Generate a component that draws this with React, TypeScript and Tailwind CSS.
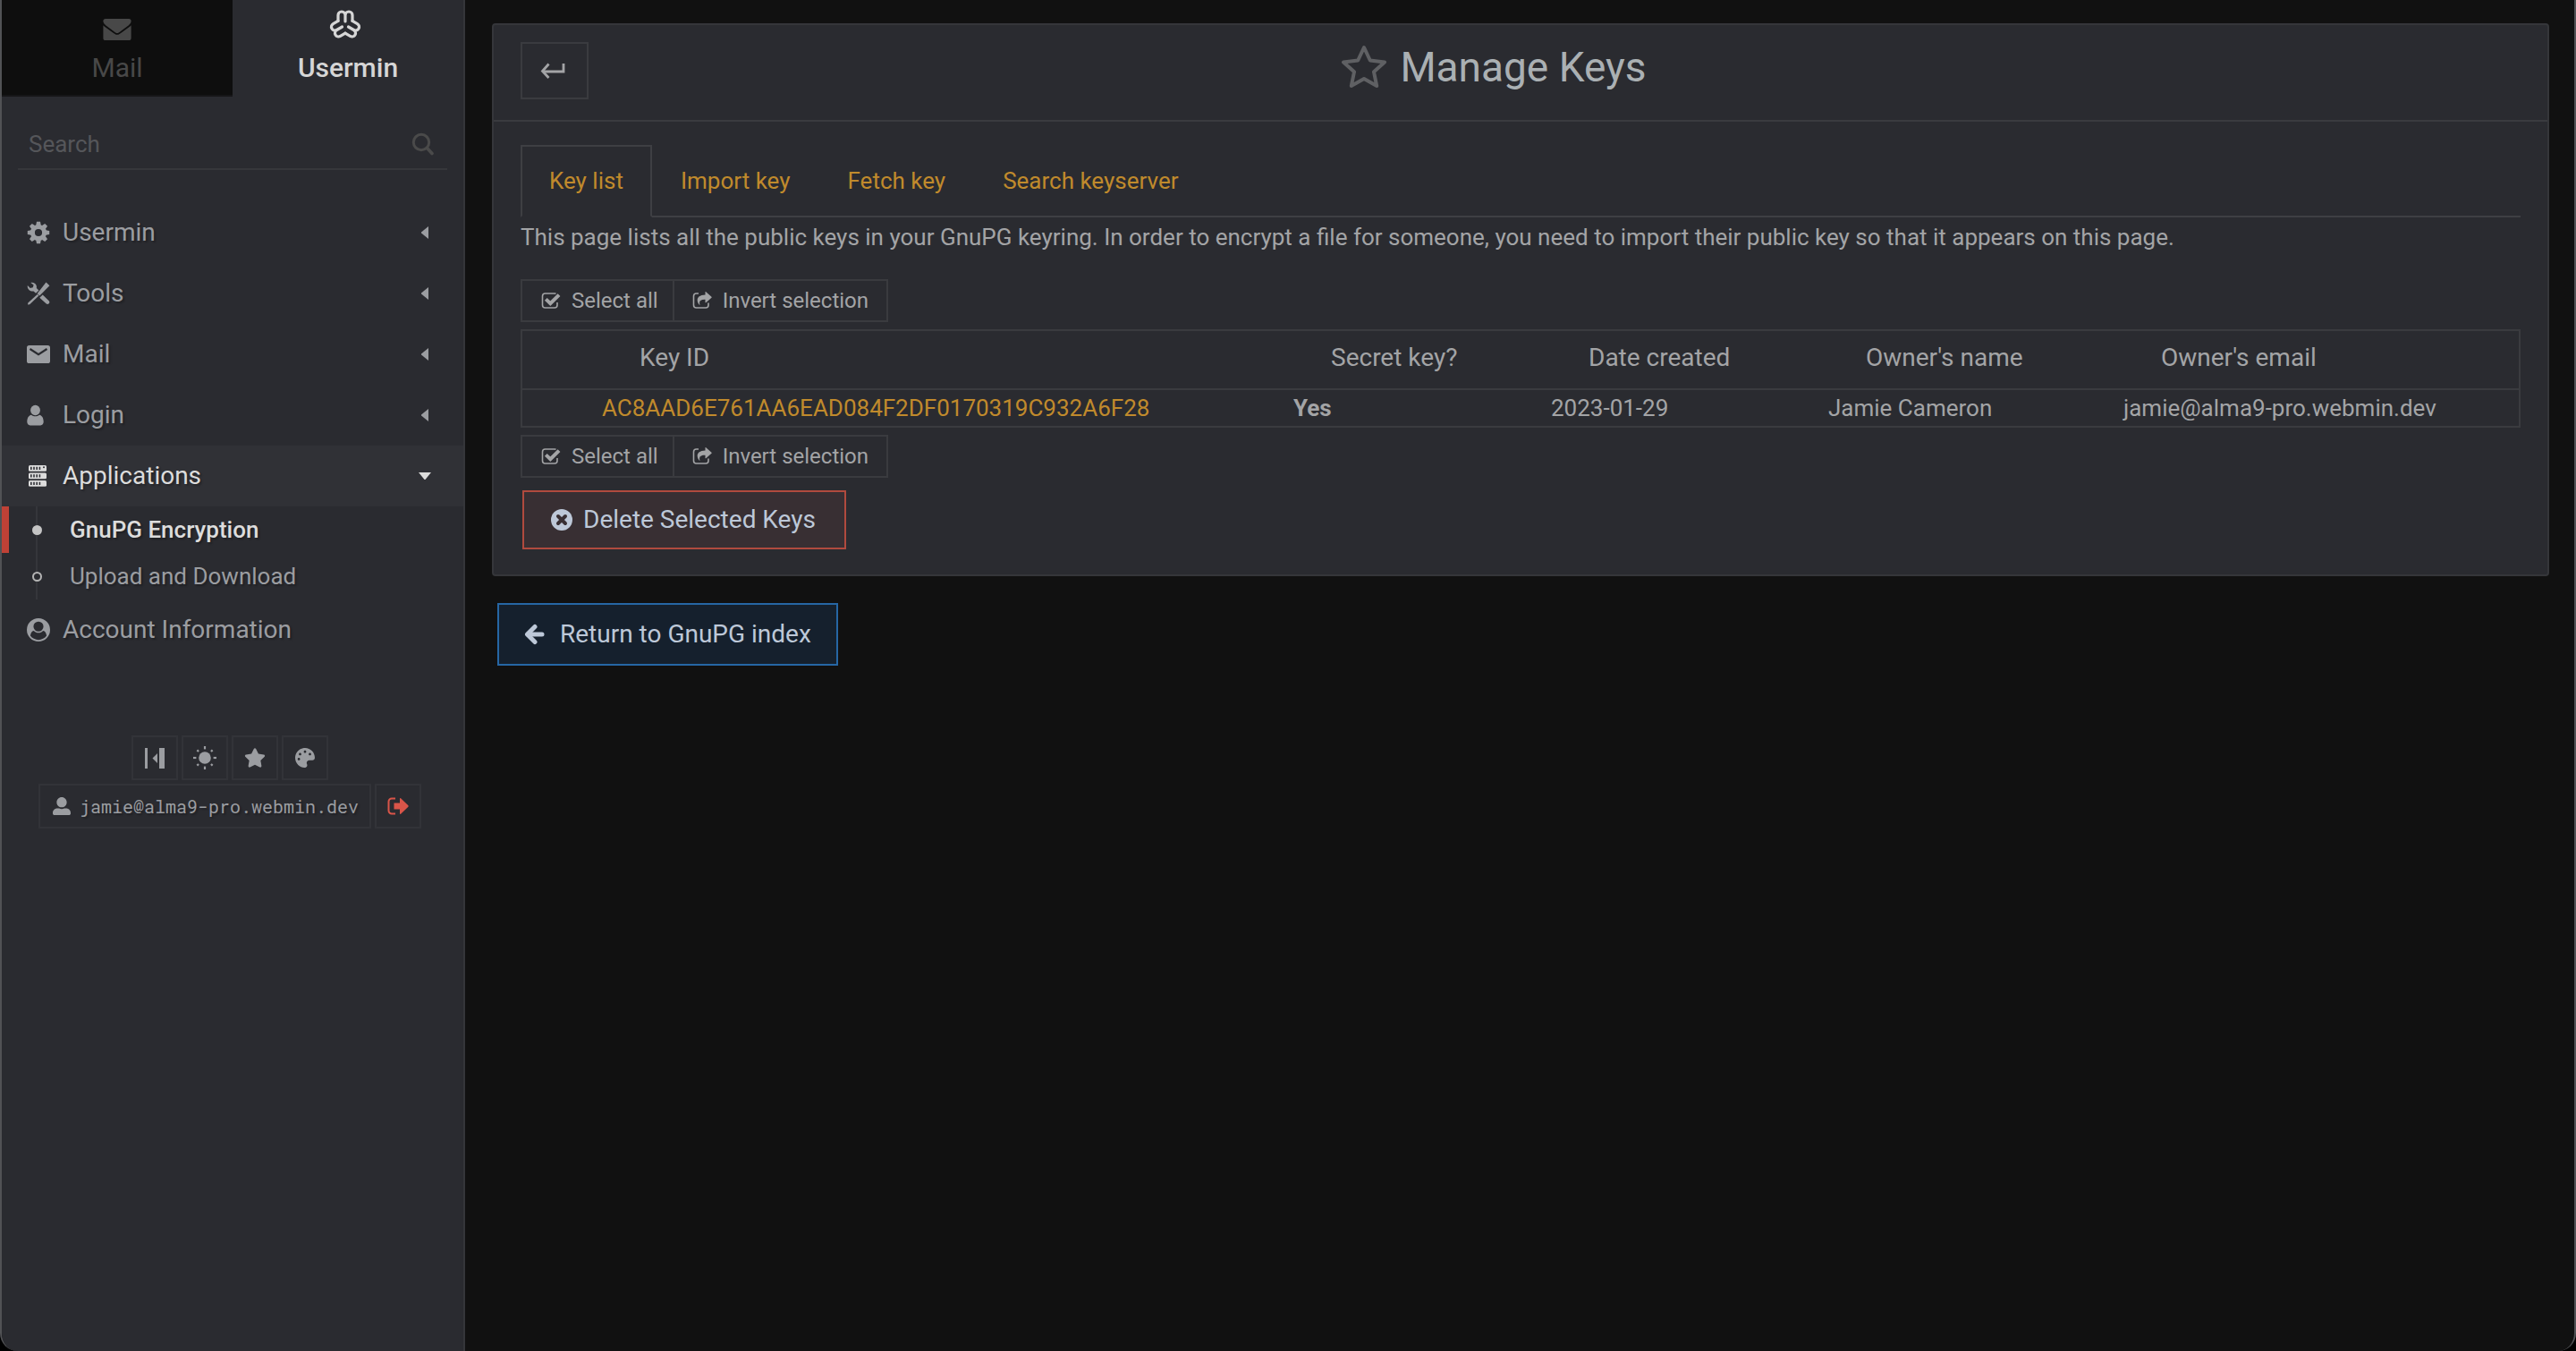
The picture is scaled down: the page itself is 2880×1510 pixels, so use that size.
import React, { useState } from "react";
import { FaStar, FaPalette, FaUserAlt } from "react-icons/fa";

type IconProps = { className?: string };

function UserminLogo({ className }: IconProps) {
  const limb = "M-8 -4.6V-11a4 4 0 0 1 8 0V-4M0 -11a4 4 0 0 1 8 0V-4.6";
  return (
    <svg viewBox="-18 -18 42 36" className={className} fill="none" stroke="currentColor" strokeWidth="3.2" strokeLinecap="round" strokeLinejoin="round" aria-hidden="true">
      <path d={limb} />
      <path d={limb} transform="rotate(120)" />
      <path d={limb} transform="rotate(240)" />
    </svg>
  );
}

function EnvelopeIcon({ className }: IconProps) {
  return (
    <svg viewBox="0 0 32 26" className={className} fill="currentColor" aria-hidden="true">
      <path d="M3 1h26a2.6 2.6 0 0 1 2.6 2.6c0 2-1.4 3.6-3 4.8L19.5 15.2c-1.2.9-2.4 1.8-3.500 1.800s-2.300-.9-3.500-1.800L3.400 8.400C1.800 7.200.4 5.600.4 3.600A2.600 2.600 0 0 1 3 1z" />
      <path d="M.4 8.200c.6.7 1.200 1.200 1.900 1.700l8.900 6.500c1.500 1.100 3 2.400 4.800 2.400s3.300-1.300 4.800-2.400l8.900-6.500c.7-.5 1.300-1 1.900-1.700V22.400A2.600 2.600 0 0 1 29 25H3A2.600 2.600 0 0 1 .4 22.400z" />
    </svg>
  );
}

function SearchIcon({ className }: IconProps) {
  return (
    <svg viewBox="0 0 26 26" className={className} fill="none" stroke="currentColor" aria-hidden="true">
      <circle cx="11" cy="11" r="8.700" strokeWidth="3" />
      <path d="M17.500 17.500L23 23.500" strokeWidth="3.600" strokeLinecap="round" />
    </svg>
  );
}

function GearIcon({ className }: IconProps) {
  return (
    <svg viewBox="-13 -13 26 26" className={className} fill="currentColor" aria-hidden="true">
      <circle r="6.600" fill="none" stroke="currentColor" strokeWidth="5" />
      {[0, 45, 90, 135, 180, 225, 270, 315].map((a) => (
        <path key={a} d="M-2.800 -8L-2 -12.200H2L2.800 -8z" transform={`rotate(${a})`} />
      ))}
    </svg>
  );
}

function ToolsIcon({ className }: IconProps) {
  return (
    <svg viewBox="0 0 26 26" className={className} fill="currentColor" aria-hidden="true">
      <path d="M21.500.6l3.900 3.700L14.300 15.500 11.600 13.200z" />
      <path d="M11.800 14L13.400 15.500 3.200 25.200 1 25.500 1.300 23.600z" />
      <path d="M4.300.9c2.700-.7 5.600.7 6.400 3.300.3 1 .3 1.900.1 2.800l2.600 2.500-3.300 3.300-2.600-2.400c-1 .3-2.100.2-3.200-.2C1.800 9.300.3 6.700.8 4.100l3 2.900 3-.8.8-2.700z" />
      <path d="M14.300 17.800l3.400-3.300 7 6.700c.9.900.9 2.200 0 3.100s-2.300.9-3.200 0z" />
    </svg>
  );
}

function MailIcon({ className }: IconProps) {
  return (
    <svg viewBox="0 0 26 26" className={className} aria-hidden="true">
      <rect y="3" width="26" height="20" rx="2.600" fill="currentColor" />
      <path d="M3.500 7L13 13.200 22.500 7" fill="none" stroke="#2a2b30" strokeWidth="2.200" />
    </svg>
  );
}

function LoginIcon({ className }: IconProps) {
  return (
    <svg viewBox="0 0 26 26" className={className} fill="currentColor" aria-hidden="true">
      <ellipse cx="9.500" cy="7.500" rx="5.400" ry="5.700" />
      <path d="M5 12.800c2.700 2 6.300 2 9 0 3.200.6 4.700 3.700 4.700 7.800 0 2.300-1.400 3.900-3.400 3.900H3.700C1.700 24.500.3 22.900.3 20.600c0-4.100 1.500-7.200 4.700-7.800z" />
    </svg>
  );
}

function ServersIcon({ className }: IconProps) {
  return (
    <svg viewBox="0 0 26 26" className={className} aria-hidden="true">
      {[1, 9.5, 18].map((y) => (
        <g key={y}>
          <rect x="2" y={y} width="20" height="6.800" rx="1.500" fill="currentColor" />
          <path d={`M4.800 ${y + 1.7}v3.400M8 ${y + 1.7}v3.400M11.200 ${y + 1.7}v3.400M14.400 ${y + 1.7}v3.400`} stroke="#303136" strokeWidth="1.600" />
        </g>
      ))}
      <circle cx="19" cy="3.300" r="1" fill="#303136" />
    </svg>
  );
}

function AccountIcon({ className }: IconProps) {
  return (
    <svg viewBox="0 0 1792 1792" className={className} fill="currentColor" fillRule="evenodd" aria-hidden="true">
      <path d="M1523 1339q-22-155-87.500-257.500t-184.500-118.500q-67 74-159.500 115.500t-195.500 41.500-195.500-41.500-159.500-115.500q-119 16-184.500 118.500t-87.500 257.500q106 150 271 237.500t356 87.500 356-87.500 271-237.500zm-243-699q0-159-112.500-271.500t-271.500-112.500-271.500 112.500-112.500 271.500 112.500 271.500 271.500 112.500 271.500-112.500 112.500-271.500zM896 0a896 896 0 1 1 0 1792 896 896 0 0 1 0-1792z" />
    </svg>
  );
}

function CollapseIcon({ className }: IconProps) {
  return (
    <svg viewBox="0 0 26 26" className={className} fill="currentColor" aria-hidden="true">
      <rect x="2" y="2" width="3" height="23" />
      <rect x="18" y="2" width="6" height="23" />
      <path d="M16 8v11l-5.500-5.500z" />
    </svg>
  );
}

function SunIcon({ className }: IconProps) {
  return (
    <svg viewBox="-13 -13 26 26" className={className} aria-hidden="true">
      <circle r="6.800" fill="currentColor" />
      {[0, 45, 90, 135, 180, 225, 270, 315].map((a) => (
        <path key={a} d={a % 90 ? "M0 -9.800V-12.200" : "M0 -9.600V-13"} stroke="currentColor" strokeWidth="2.200" transform={`rotate(${a})`} />
      ))}
    </svg>
  );
}

function LogoutIcon({ className }: IconProps) {
  return (
    <svg viewBox="0 0 26 26" className={className} fill="currentColor" aria-hidden="true">
      <path d="M10 4.500H6A3.500 3.500 0 0 0 2.500 8v10A3.500 3.500 0 0 0 6 21.500h4" fill="none" stroke="currentColor" strokeWidth="2" />
      <path d="M8.500 9.500H15V4.800c0-.7.6-.9 1.100-.5l8.300 8c.4.4.4 1 0 1.400l-8.300 8c-.5.4-1.100.2-1.100-.5V16.500H8.500z" />
    </svg>
  );
}

function ReturnIcon({ className }: IconProps) {
  return (
    <svg viewBox="0 0 32 20" className={className} fill="none" stroke="currentColor" strokeWidth="2.800" aria-hidden="true">
      <path d="M26 2V11H3" />
      <path d="M9.500 2.500L2.500 10.500 9.500 18" />
    </svg>
  );
}

function OutlineStarIcon({ className }: IconProps) {
  return (
    <svg viewBox="0 1 52 50" className={className} fill="none" stroke="currentColor" strokeWidth="4" strokeLinejoin="round" aria-hidden="true">
      <path d="M26 4l6.800 14.500L49 20.500 37 31.300 40.200 47 26 39 11.800 47 15 31.300 3 20.500l16.200-2z" />
    </svg>
  );
}

function CheckBoxIcon({ className }: IconProps) {
  return (
    <svg viewBox="0 0 22 20" className={className} fill="none" stroke="currentColor" aria-hidden="true">
      <path d="M16.500 2.200C16 2 15.500 2 15 2H4.500A3 3 0 0 0 1.500 5v10a3 3 0 0 0 3 3H15a3 3 0 0 0 3-3v-3" strokeWidth="1.600" />
      <path d="M5.300 8.400l5 4.800L20 3.600" strokeWidth="4" />
    </svg>
  );
}

function ShareIcon({ className }: IconProps) {
  return (
    <svg viewBox="0 0 22 20" className={className} fill="currentColor" aria-hidden="true">
      <path d="M7 2H4.500A3 3 0 0 0 1.500 5v10a3 3 0 0 0 3 3H15a3 3 0 0 0 3-3v-2.500" fill="none" stroke="currentColor" strokeWidth="1.600" />
      <path d="M14.500.4c0-.4.5-.5.8-.2l6.200 5.500c.3.3.3.7 0 1l-6.200 5.500c-.3.3-.8.1-.8-.3V8.700c-5.400-.2-7.400 1.600-6 6.500C3.800 10.500 4.500 3.800 14.500 3.500z" />
    </svg>
  );
}

function TimesCircleIcon({ className }: IconProps) {
  return (
    <svg viewBox="0 0 24 24" className={className} aria-hidden="true">
      <circle cx="12" cy="12" r="12" fill="currentColor" />
      <path d="M8 8l8 8M16 8l-8 8" stroke="#382f33" strokeWidth="4" strokeLinecap="round" />
    </svg>
  );
}

function ArrowLeftIcon({ className }: IconProps) {
  return (
    <svg viewBox="0 0 24 24" className={className} fill="none" stroke="currentColor" strokeWidth="5" strokeLinecap="round" strokeLinejoin="round" aria-hidden="true">
      <path d="M4 12H20" />
      <path d="M12 3.500L3.500 12l8.500 8.500" />
    </svg>
  );
}

const menu = [
  { label: "Usermin", Icon: GearIcon },
  { label: "Tools", Icon: ToolsIcon },
  { label: "Mail", Icon: MailIcon },
  { label: "Login", Icon: LoginIcon },
];

const quickActions = [
  { label: "Collapse menu", icon: <CollapseIcon className="size-[26px]" /> },
  { label: "Toggle theme", icon: <SunIcon className="size-[26px]" /> },
  { label: "Favorites", icon: <FaStar className="size-6" /> },
  { label: "Theme palette", icon: <FaPalette className="size-[22px]" /> },
];

const shadow = "[text-shadow:2px_2px_2px_rgba(0,0,0,0.25)]";

function Sidebar() {
  return (
    <aside className="flex w-[518px] shrink-0 flex-col border-r-2 border-[#35363a] bg-[#2a2b30] text-[#9b9da1]">
      <nav className="grid h-[108px] grid-cols-2" aria-label="Product">
        <a href="#mail" className="flex flex-col items-center border-b-2 border-[#161618] bg-[#0e0e0e] pt-5 text-[30px] leading-9 text-[#484848]">
          <EnvelopeIcon className="h-[26px] w-8" />
          <span className="mt-3">Mail</span>
        </a>
        <a href="#usermin" className="flex flex-col items-center pt-2.5 text-[30px] leading-9 font-medium text-[#d6d6d6]">
          <UserminLogo className="h-9 w-[42px]" />
          <span className="mt-3">Usermin</span>
        </a>
      </nav>

      <div className="mx-[18px] mt-8 flex h-[50px] items-center border-b-2 border-[#36373b] pr-3.5 pb-1.5 pl-3">
        <input type="text" aria-label="Search" placeholder="Search" className="min-w-0 flex-1 bg-transparent text-[26px] outline-none placeholder:text-[#55565a]" />
        <SearchIcon className="size-[26px] text-[#4a4a4a]" />
      </div>

      <ul className="mt-9">
        {menu.map(({ label, Icon }) => (
          <li key={label}>
            <a href="#menu" className="flex h-[68px] items-center pr-[39px] pl-7 text-[28px]">
              <Icon className="size-[26px]" />
              <span className={`ml-3.5 flex-1 ${shadow}`}>{label}</span>
              <svg viewBox="0 0 8 14" className="h-3.5 w-2" fill="currentColor" aria-hidden="true"><path d="M8 0v14L0 7.500v-1z" /></svg>
            </a>
          </li>
        ))}
        <li>
          <a href="#applications" className="flex h-[68px] items-center bg-[#303136] pr-9 pl-7 text-[28px] text-[#dcdcdc]">
            <ServersIcon className="size-[26px]" />
            <span className={`ml-3.5 flex-1 ${shadow}`}>Applications</span>
            <svg viewBox="0 0 14 8" className="h-2 w-3.5" fill="currentColor" aria-hidden="true"><path d="M0 0h14L7.500 8h-1z" /></svg>
          </a>
          <ul className="text-[26px]">
            <li className="relative flex h-[52px] items-center">
              <span className="absolute inset-y-0 -left-0.5 w-2.5 bg-[#bf4136]" />
              <span className="absolute inset-y-0 left-[38px] w-0.5 bg-[#35363b]" />
              <span className="relative ml-[34px] size-[11px] rounded-full bg-[#c4c4c4]" />
              <a href="#gnupg" className={`ml-[31px] font-medium text-[#dcdcdc] ${shadow}`}>GnuPG Encryption</a>
            </li>
            <li className="relative flex h-[52px] items-center">
              <span className="absolute inset-y-0 left-[38px] w-0.5 bg-[#35363b]" />
              <span className="relative ml-[34px] size-[11px] rounded-full border-2 border-[#b4b4b4] bg-[#2a2b30]" />
              <a href="#upload" className={`ml-[31px] ${shadow}`}>Upload and Download</a>
            </li>
          </ul>
        </li>
        <li>
          <a href="#account" className="flex h-[68px] items-center pr-10 pl-7 text-[28px]">
            <AccountIcon className="size-[26px]" />
            <span className={`ml-3.5 ${shadow}`}>Account Information</span>
          </a>
        </li>
      </ul>

      <div className="mt-[84px] flex flex-col items-center gap-1 pr-1.5">
        <div className="flex gap-1">
          {quickActions.map(({ label, icon }) => (
            <button key={label} type="button" aria-label={label} className="flex h-[50px] w-[52px] items-center justify-center border-2 border-[#323338]">
              {icon}
            </button>
          ))}
        </div>
        <div className="flex gap-1">
          <button type="button" className={`flex h-[50px] items-center gap-2.5 border-2 border-[#323338] pr-3 pl-3.5 font-['Roboto_Mono','Liberation_Mono',monospace] text-[20px] ${shadow}`}>
            <FaUserAlt className="h-6 w-5" />
            jamie@alma9-pro.webmin.dev
          </button>
          <button type="button" aria-label="Log out" className="flex h-[50px] w-[52px] items-center justify-center border-2 border-[#323338] text-[#d95549]">
            <LogoutIcon className="size-[26px]" />
          </button>
        </div>
      </div>
    </aside>
  );
}

function SelectionButtons() {
  return (
    <div className="flex text-[24px]">
      <button type="button" className="flex h-12 items-center gap-3 border-2 border-[#3a3b3f] pr-4 pl-[21px]">
        <CheckBoxIcon className="h-5 w-[22px]" />
        Select all
      </button>
      <button type="button" className="-ml-0.5 flex h-12 items-center gap-3 border-2 border-[#3a3b3f] px-5">
        <ShareIcon className="h-5 w-[22px]" />
        Invert selection
      </button>
    </div>
  );
}

const tabs = ["Key list", "Import key", "Fetch key", "Search keyserver"];
const headings = ["Key ID", "Secret key?", "Date created", "Owner's name", "Owner's email"];

export default function App() {
  const [active, setActive] = useState(0);
  return (
    <div className="bg-black font-[Roboto,sans-serif] text-[#a3a4a6]">
      <div className="flex min-h-screen overflow-hidden rounded-b-[20px] border-x-2 border-[#515255] bg-[#111111]">
        <Sidebar />
        <main className="min-w-0 flex-1 pt-[26px] pr-7 pb-10 pl-[30px]">
          <section className="rounded-sm border-2 border-[#35363a] bg-[#2a2b30]">
            <header className="grid h-[108px] grid-cols-[1fr_auto_1fr] items-start border-b-2 border-[#3a3b3f] pt-[19px] pr-[90px] pl-[30px]">
              <button type="button" aria-label="Go back" className="flex h-16 w-[76px] items-center justify-center border-2 border-[#3a3b3f]">
                <ReturnIcon className="h-5 w-8" />
              </button>
              <h1 className="flex items-center gap-3.5 text-[46px] leading-[56px] text-[#aab0b3]">
                <OutlineStarIcon className="h-[50px] w-[52px] text-[#5f6063]" />
                Manage Keys
              </h1>
            </header>

            <div className="px-[30px] pt-[26px] pb-7 text-[26px]">
              <div role="tablist" className="flex border-b-2 border-[#3e3f43] leading-9 text-[#c08a2c]">
                {tabs.map((tab, i) => (
                  <button
                    key={tab}
                    type="button"
                    role="tab"
                    aria-selected={i === active}
                    onClick={() => setActive(i)}
                    className={
                      i === active
                        ? "-mb-0.5 border-2 border-[#3e3f43] border-b-[#2a2b30] px-[30px] pt-5 pb-[21px]"
                        : "border-x-2 border-t-2 border-transparent px-[30px] pt-5 pb-[21px]"
                    }
                  >
                    {tab}
                  </button>
                ))}
              </div>
              <p className="mt-1 mb-7 leading-[37px]">
                This page lists all the public keys in your GnuPG keyring. In order to encrypt a file for someone, you need to import their public key so that it appears on this page.
              </p>

              <SelectionButtons />
              <table className="my-2 w-full table-fixed border-collapse text-left">
                <colgroup>
                  <col className="w-20" />
                  <col />
                  <col className="w-[288px]" />
                  <col className="w-[310px]" />
                  <col className="w-[330px]" />
                  <col className="w-[453px]" />
                </colgroup>
                <thead>
                  <tr className="h-[66px] border-2 border-[#3a3b3f] text-[28px] leading-8">
                    <td />
                    {headings.map((h) => (
                      <th key={h} scope="col" className="pb-1 pl-[52px] font-normal">{h}</th>
                    ))}
                  </tr>
                </thead>
                <tbody>
                  <tr className="h-[42px] border-2 border-[#3a3b3f] leading-8">
                    <td />
                    <td className="pl-2.5"><a href="#key" className="text-[#c08a2c]">AC8AAD6E761AA6EAD084F2DF0170319C932A6F28</a></td>
                    <td className="pl-2.5 font-bold">Yes</td>
                    <td className="pl-2.5">2023-01-29</td>
                    <td className="pl-2.5">Jamie Cameron</td>
                    <td className="pl-2.5">jamie@alma9-pro.webmin.dev</td>
                  </tr>
                </tbody>
              </table>
              <SelectionButtons />

              <button type="button" className="mt-3.5 ml-0.5 flex h-[66px] items-center gap-3 border-2 border-[#b04a3e] bg-[#382f33] pr-8 pl-[30px] text-[28px] text-[#bdc8d8]">
                <TimesCircleIcon className="size-6" />
                Delete Selected Keys
              </button>
            </div>
          </section>

          <a href="#index" className="mt-[30px] ml-1.5 inline-flex h-[70px] items-center gap-4 border-2 border-[#2666a4] bg-[#15202d] px-7 text-[28px] text-[#bdc8d8]">
            <ArrowLeftIcon className="size-6" />
            Return to GnuPG index
          </a>
        </main>
      </div>
    </div>
  );
}
